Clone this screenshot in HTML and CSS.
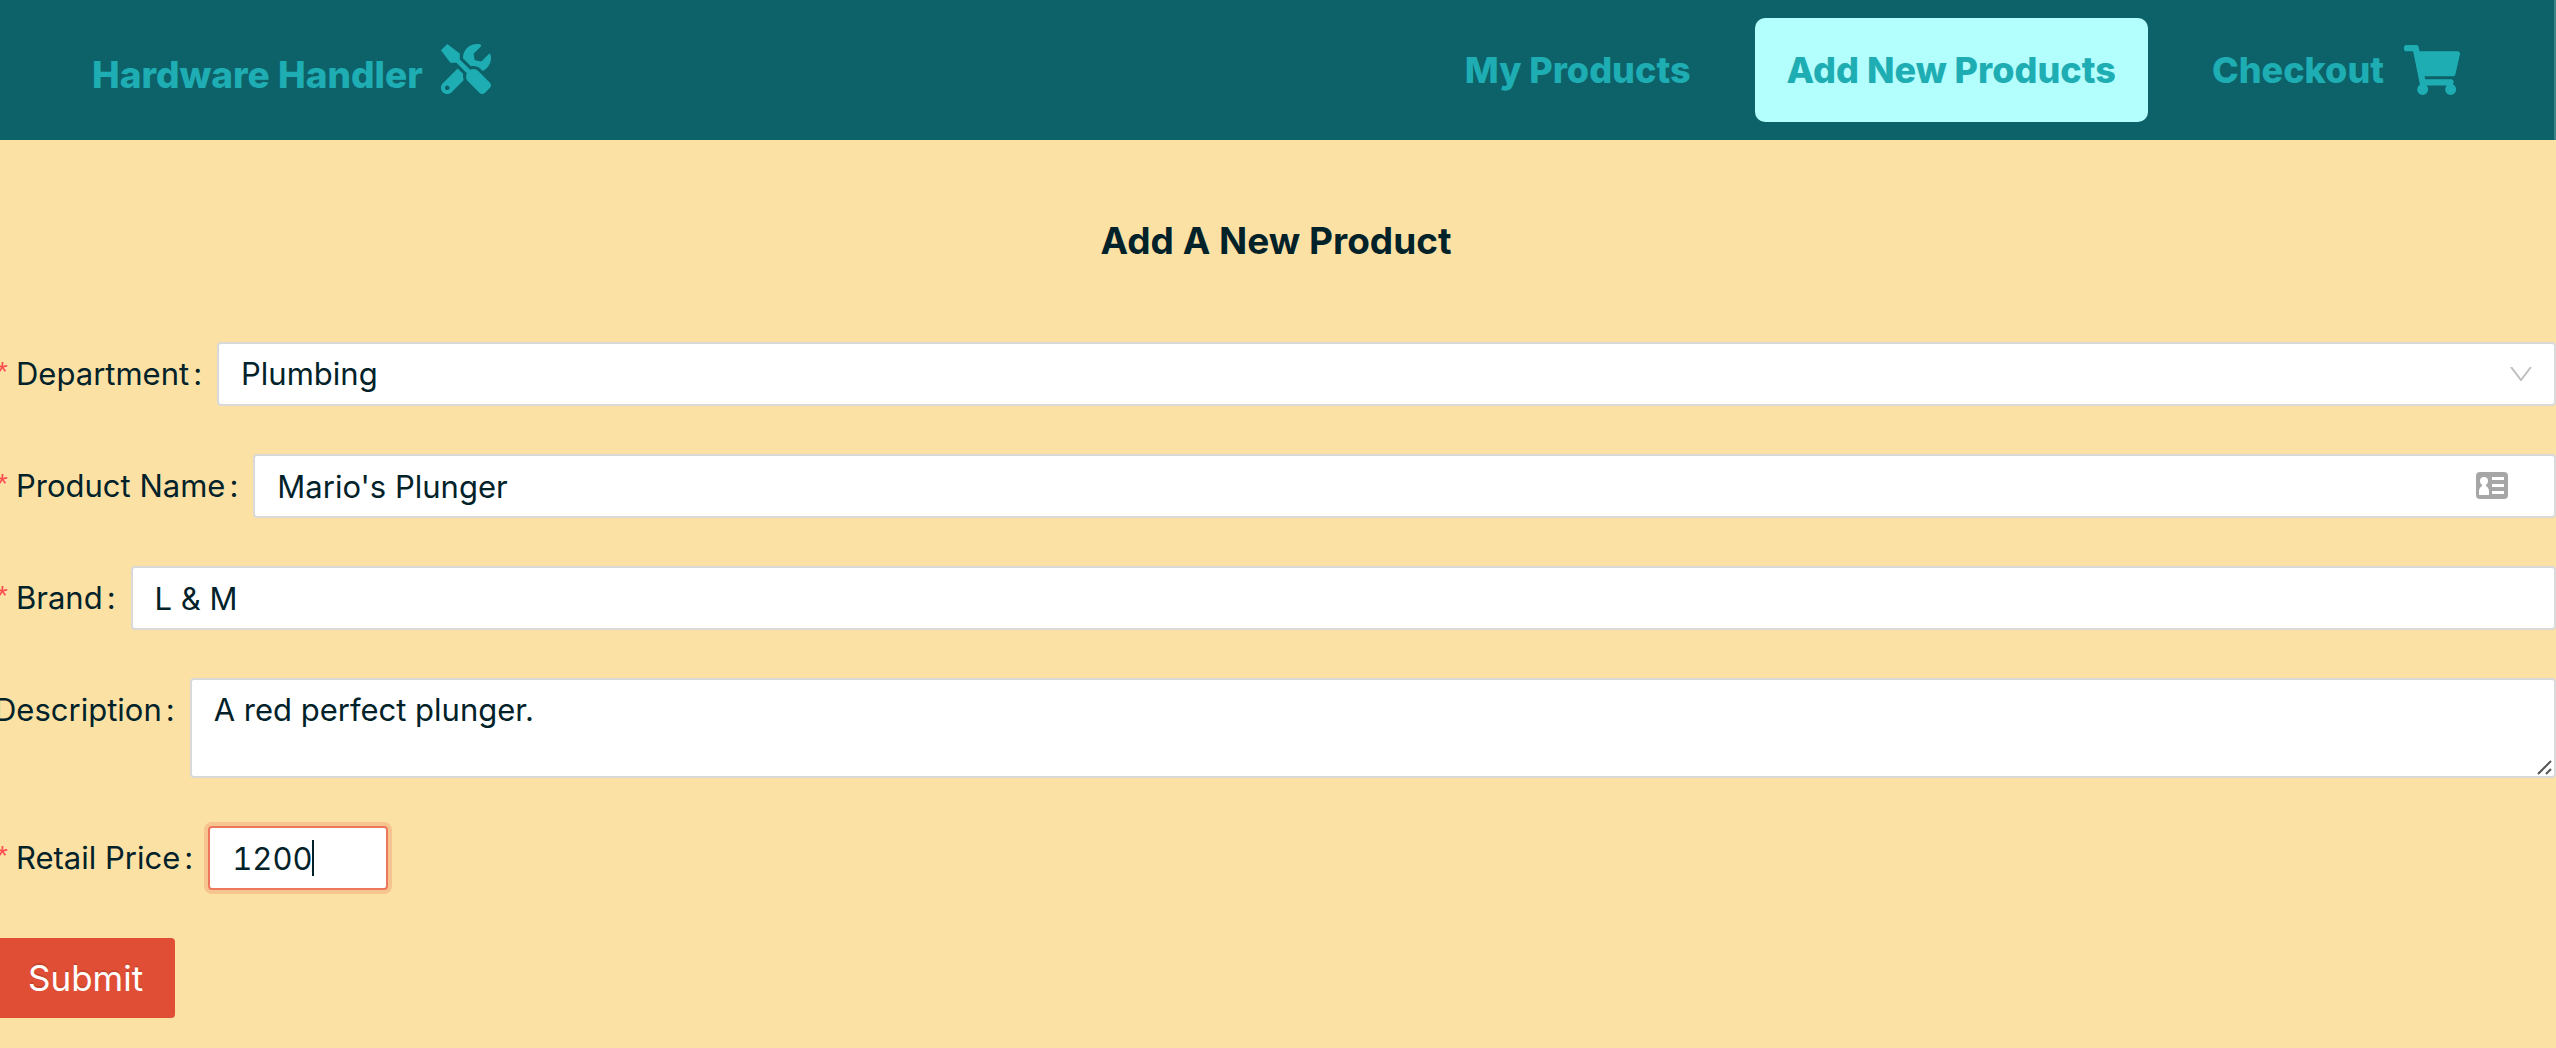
FILE: index.html
```html
<!DOCTYPE html>
<html lang="en">
<head>
<meta charset="utf-8">
<title>Hardware Handler</title>
<link rel="stylesheet" href="styles.css">
</head>
<body>
<header class="navbar">
  <a class="brand" href="#">
    <span>Hardware Handler</span>
    <svg class="brand-icon" viewBox="0 0 512 512" aria-hidden="true"><path fill="currentColor" d="M501.1 395.7L384 278.6c-23.1-23.1-57.6-27.6-85.4-13.9L192 158.1V96L64 0 0 64l96 128h62.1l106.6 106.6c-13.6 27.8-9.2 62.3 13.9 85.4l117.1 117.1c14.6 14.6 38.2 14.6 52.7 0l52.7-52.7c14.5-14.6 14.5-38.2 0-52.7zM331.7 225c28.3 0 54.9 11 74.9 31l19.4 19.4c15.8-6.9 30.8-16.5 43.8-29.5 37.1-37.1 49.7-89.3 37.9-136.7-2.2-9-13.5-12.1-20.1-5.5l-74.4 74.4-67.9-11.3L334 98.9l74.4-74.4c6.6-6.6 3.4-17.9-5.7-20.2-47.4-11.7-99.6.9-136.6 37.9-28.5 28.5-41.9 66.1-41.2 103.6l82.1 82.1c8.1-1.9 16.5-2.9 24.7-2.9zm-103.9 82l-56.7-56.7L18.7 402.8c-25 25-25 65.5 0 90.5s65.5 25 90.5 0l123.6-123.6c-7.6-19.9-9.9-41.6-5-62.7zM64 472c-13.2 0-24-10.8-24-24 0-13.3 10.7-24 24-24s24 10.7 24 24c0 13.2-10.7 24-24 24z"/></svg>
  </a>
  <nav class="nav">
    <a class="nav-link" href="#">My Products</a>
    <a class="nav-link nav-link-active" href="#" aria-current="page">Add New Products</a>
    <a class="nav-link" href="#">
      <span>Checkout</span>
      <svg class="cart-icon" viewBox="0 0 576 512" aria-hidden="true"><path fill="currentColor" d="M528.12 301.319l47.273-208C578.806 78.301 567.391 64 551.99 64H159.208l-9.166-44.81C147.758 8.021 137.93 0 126.529 0H24C10.745 0 0 10.745 0 24v16c0 13.255 10.745 24 24 24h69.883l70.248 343.435C147.325 417.1 136 435.222 136 456c0 30.928 25.072 56 56 56s56-25.072 56-56c0-15.674-6.447-29.835-16.824-40h209.647C430.447 426.165 424 440.326 424 456c0 30.928 25.072 56 56 56s56-25.072 56-56c0-22.172-12.888-41.332-31.579-50.405l5.517-24.276c3.413-15.018-8.002-29.319-23.403-29.319H218.117l-6.545-32h293.145c11.206 0 20.92-7.754 23.403-18.681z"/></svg>
    </a>
  </nav>
</header>
<main>
  <h1 class="title">Add A New Product</h1>
  <form class="form">
    <div class="row">
      <label class="label required" for="department">Department</label>
      <div class="control">
        <select class="field" id="department"><option>Plumbing</option></select>
        <svg class="chevron" viewBox="0 0 22 14" aria-hidden="true"><path d="M1 0L11 13L21 0" fill="none" stroke="#bfbfbf" stroke-width="2"/></svg>
      </div>
    </div>
    <div class="row">
      <label class="label required" for="name">Product Name</label>
      <div class="control">
        <input class="field" id="name" type="text" value="Mario's Plunger">
        <svg class="card-icon" viewBox="0 0 32 27" aria-hidden="true"><rect width="32" height="27" rx="4" fill="#a6a6a6"/><g fill="#fff"><circle cx="8" cy="9" r="4"/><path d="M6 11h4v3c2 1 3 3 3 5v4H3v-4c0-2 1-4 3-5z"/><path d="M16 5h12v3H16zM16 12h12v3H16zM16 19h12v3H16z"/></g></svg>
      </div>
    </div>
    <div class="row">
      <label class="label required" for="brand">Brand</label>
      <div class="control"><input class="field" id="brand" type="text" value="L &amp; M"></div>
    </div>
    <div class="row">
      <label class="label" for="description">Description</label>
      <div class="control">
        <textarea class="field field-area" id="description">A red perfect plunger.</textarea>
        <svg class="grip" viewBox="0 0 15 15" aria-hidden="true"><path d="M1 14L14 1M9 14L14 9" fill="none" stroke="#555" stroke-width="2"/></svg>
      </div>
    </div>
    <div class="row">
      <label class="label required" for="price">Retail Price</label>
      <div class="control control-price">
        <input class="field field-focused" id="price" type="text" inputmode="numeric" value="1200">
        <span class="caret"></span>
      </div>
    </div>
    <button class="submit" type="submit">Submit</button>
  </form>
</main>
</body>
</html>
```

FILE: styles.css
```css
* {
  box-sizing: border-box;
}

body {
  margin: 0;
  overflow-x: hidden;
  background: #fce1a4;
  color: #02222a;
  font-family: Inter, "Liberation Sans", sans-serif;
  font-size: 31px;
  line-height: 48px;
}

.navbar {
  display: flex;
  align-items: center;
  justify-content: space-between;
  height: 140px;
  padding: 0 94px 0 92px;
  border-right: 2px solid #3d8286;
  background: #0c6268;
}

.brand,
.nav-link {
  display: flex;
  align-items: center;
  color: #1fadb4;
  font-size: 36px;
  font-weight: 800;
  text-decoration: none;
}

.brand {
  gap: 18px;
  padding-top: 10px;
  font-size: 37px;
}

.brand-icon {
  width: 50px;
  height: 50px;
  margin-bottom: 12px;
}

.nav {
  display: flex;
  gap: 32px;
}

.nav-link {
  gap: 20px;
  height: 104px;
  padding: 0 32px;
  border-radius: 10px;
}

.nav-link:last-child {
  padding-right: 0;
}

.nav-link-active {
  background: #b2fffe;
}

.cart-icon {
  width: 56px;
  height: 50px;
}

.title {
  margin: 76px 4px 76px 0;
  font-size: 37px;
  font-weight: 700;
  line-height: 50px;
  text-align: center;
}

.form {
  display: flex;
  flex-direction: column;
  align-items: flex-start;
  gap: 48px;
  margin-left: -6px;
}

.row {
  display: flex;
  align-items: flex-start;
  width: 100%;
}

.label {
  flex: none;
  height: 64px;
  padding-right: 15px;
  line-height: 64px;
}

.label::after {
  content: ":";
  margin-left: 4px;
}

.required::before {
  content: "*";
  display: inline-block;
  width: 14px;
  margin-right: 8px;
  color: #ff4d4f;
  font-family: "Liberation Sans", sans-serif;
  font-size: 28px;
  line-height: 40px;
  text-align: right;
  vertical-align: 4px;
}

.control {
  position: relative;
  display: flex;
  flex: 1;
}

.control-price {
  flex: 0 0 180px;
}

.field {
  width: 100%;
  height: 64px;
  margin: 0;
  padding: 0 22px;
  border: 2px solid #d9d9d9;
  border-radius: 4px;
  outline: none;
  appearance: none;
  background: #fff;
  color: inherit;
  font: inherit;
}

.field-area {
  height: 100px;
  padding-top: 6px;
  resize: none;
}

.field-focused {
  border-color: #ed775d;
  box-shadow: 0 0 0 4px rgba(224, 79, 53, 0.2);
  font-variant-numeric: tabular-nums;
}

.caret {
  position: absolute;
  top: 14px;
  left: 104px;
  width: 2px;
  height: 36px;
  background: #02222a;
}

.chevron {
  position: absolute;
  top: 25px;
  right: 24px;
  width: 22px;
  height: 14px;
}

.card-icon {
  position: absolute;
  top: 18px;
  right: 48px;
  width: 32px;
  height: 27px;
}

.grip {
  position: absolute;
  right: 4px;
  bottom: 3px;
  width: 15px;
  height: 15px;
}

.submit {
  height: 80px;
  padding: 0 32px 0 34px;
  border: 0;
  border-radius: 4px;
  background: #e04f35;
  box-shadow: 0 4px 0 rgba(0, 0, 0, 0.045);
  color: #fff;
  font: inherit;
  font-size: 35px;
  text-shadow: 0 -2px 0 rgba(0, 0, 0, 0.12);
}
```
